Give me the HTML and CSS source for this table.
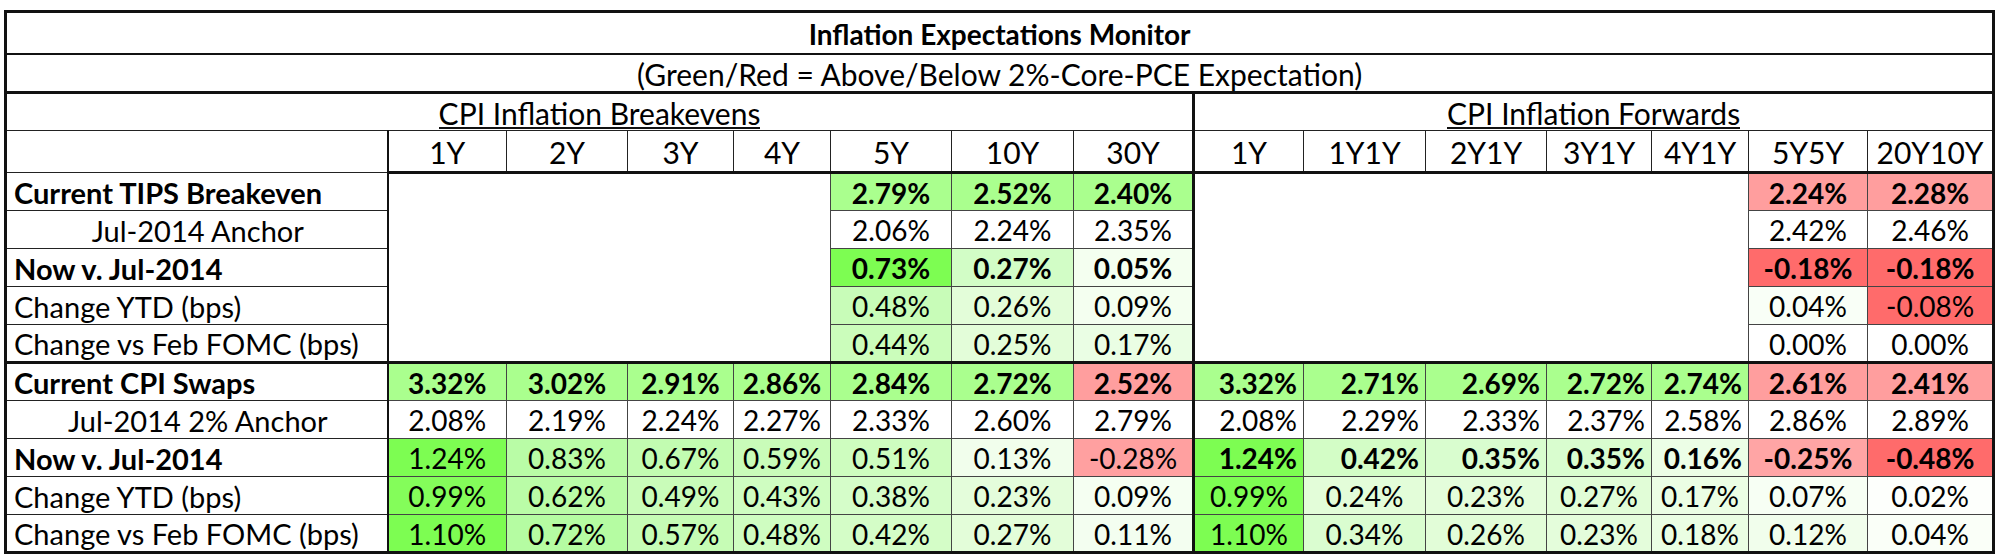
FILE: index.html
```html
<!DOCTYPE html>
<html>
<head>
<meta charset="utf-8">
<title>Inflation Expectations Monitor</title>
<link rel="stylesheet" href="styles.css">
</head>
<body>
<div class="wrap">
<table class="monitor">
  <colgroup>
    <col class="w-label"><col class="w-1y"><col class="w-2y"><col class="w-3y"><col class="w-4y"><col class="w-5y"><col class="w-10y"><col class="w-30y">
    <col class="w-f1y"><col class="w-1y1y"><col class="w-2y1y"><col class="w-3y1y"><col class="w-4y1y"><col class="w-5y5y"><col class="w-20y10y">
  </colgroup>
  <tr class="title"><td colspan="15">Inflation Expectations Monitor</td></tr>
  <tr class="subtitle"><td colspan="15">(Green/Red = Above/Below 2%-Core-PCE Expectation)</td></tr>
  <tr class="section">
    <td colspan="8"><span class="ul">CPI Inflation Breakevens</span></td>
    <td colspan="7" class="divl"><span class="ul">CPI Inflation Forwards</span></td>
  </tr>
  <tr class="head">
    <td class="lab"></td>
    <td>1Y</td><td>2Y</td><td>3Y</td><td>4Y</td><td>5Y</td><td>10Y</td><td>30Y</td>
    <td class="divl">1Y</td><td>1Y1Y</td><td>2Y1Y</td><td>3Y1Y</td><td>4Y1Y</td><td>5Y5Y</td><td>20Y10Y</td>
  </tr>

  <tr class="data bold">
    <td class="lab">Current TIPS Breakeven</td>
    <td class="blank" colspan="4" rowspan="5"></td>
    <td style="background:#aaff8e">2.79%</td><td style="background:#aaff8e">2.52%</td><td style="background:#aaff8e">2.40%</td>
    <td class="blank divl" colspan="5" rowspan="5"></td>
    <td style="background:#ff9e9e">2.24%</td><td style="background:#ff9e9e">2.28%</td>
  </tr>
  <tr class="data">
    <td class="lab center">Jul-2014 Anchor</td>
    <td>2.06%</td><td>2.24%</td><td>2.35%</td>
    <td>2.42%</td><td>2.46%</td>
  </tr>
  <tr class="data bold">
    <td class="lab">Now v. Jul-2014</td>
    <td style="background:#7dfd52">0.73%</td><td style="background:#d2fdc6">0.27%</td><td style="background:#f4fff0">0.05%</td>
    <td style="background:#ff6b6b">-0.18%</td><td style="background:#ff6b6b">-0.18%</td>
  </tr>
  <tr class="data">
    <td class="lab">Change YTD (bps)</td>
    <td style="background:#c8fcb8">0.48%</td><td style="background:#e3fdd9">0.26%</td><td style="background:#f4fff0">0.09%</td>
    <td style="background:#f9fff7">0.04%</td><td style="background:#ff6b6b">-0.08%</td>
  </tr>
  <tr class="data">
    <td class="lab">Change vs Feb FOMC (bps)</td>
    <td style="background:#cbfdbb">0.44%</td><td style="background:#e3fdd9">0.25%</td><td style="background:#eafee4">0.17%</td>
    <td>0.00%</td><td>0.00%</td>
  </tr>

  <tr class="data bold sep">
    <td class="lab">Current CPI Swaps</td>
    <td style="background:#aaff8e">3.32%</td><td style="background:#aaff8e">3.02%</td><td style="background:#aaff8e">2.91%</td><td style="background:#aaff8e">2.86%</td><td style="background:#aaff8e">2.84%</td><td style="background:#aaff8e">2.72%</td><td style="background:#ff9e9e">2.52%</td>
    <td class="divl r" style="background:#aaff8e">3.32%</td><td class="r" style="background:#aaff8e">2.71%</td><td class="r" style="background:#aaff8e">2.69%</td><td class="r" style="background:#aaff8e">2.72%</td><td class="r" style="background:#aaff8e">2.74%</td><td style="background:#ff9e9e">2.61%</td><td style="background:#ff9e9e">2.41%</td>
  </tr>
  <tr class="data">
    <td class="lab center">Jul-2014 2% Anchor</td>
    <td>2.08%</td><td>2.19%</td><td>2.24%</td><td>2.27%</td><td>2.33%</td><td>2.60%</td><td>2.79%</td>
    <td class="divl r">2.08%</td><td class="r">2.29%</td><td class="r">2.33%</td><td class="r">2.37%</td><td class="r">2.58%</td><td>2.86%</td><td>2.89%</td>
  </tr>
  <tr class="data">
    <td class="lab b">Now v. Jul-2014</td>
    <td style="background:#7dfd52">1.24%</td><td style="background:#b9fca6">0.83%</td><td style="background:#c2fcb1">0.67%</td><td style="background:#c9fcb9">0.59%</td><td style="background:#cefdbf">0.51%</td><td style="background:#f1feec">0.13%</td><td style="background:#ffa0a0">-0.28%</td>
    <td class="divl r b" style="background:#7dfd52">1.24%</td><td class="r b" style="background:#d3fdc6">0.42%</td><td class="r b" style="background:#d9fdcf">0.35%</td><td class="r b" style="background:#d9fdcf">0.35%</td><td class="r b" style="background:#ecfee6">0.16%</td><td class="b" style="background:#ffa5a5">-0.25%</td><td class="b" style="background:#ff6b6b">-0.48%</td>
  </tr>
  <tr class="data">
    <td class="lab">Change YTD (bps)</td>
    <td style="background:#84fd5a">0.99%</td><td style="background:#bafca7">0.62%</td><td style="background:#c9fcb9">0.49%</td><td style="background:#cffdc1">0.43%</td><td style="background:#d5fdc9">0.38%</td><td style="background:#e4fddb">0.23%</td><td style="background:#f5fff2">0.09%</td>
    <td class="divl" style="background:#7dfd52">0.99%</td><td style="background:#e3fdd9">0.24%</td><td style="background:#e4fddb">0.23%</td><td style="background:#e1fdd7">0.27%</td><td style="background:#ebfee4">0.17%</td><td style="background:#f7fff4">0.07%</td><td style="background:#fdfffc">0.02%</td>
  </tr>
  <tr class="data">
    <td class="lab">Change vs Feb FOMC (bps)</td>
    <td style="background:#7dfd52">1.10%</td><td style="background:#b5fca2">0.72%</td><td style="background:#c6fcb5">0.57%</td><td style="background:#cffdc1">0.48%</td><td style="background:#d4fdc7">0.42%</td><td style="background:#e3fdd9">0.27%</td><td style="background:#f3fef0">0.11%</td>
    <td class="divl" style="background:#7dfd52">1.10%</td><td style="background:#dafdd0">0.34%</td><td style="background:#e2fdd8">0.26%</td><td style="background:#e4fddb">0.23%</td><td style="background:#eafee3">0.18%</td><td style="background:#f1feec">0.12%</td><td style="background:#fafff8">0.04%</td>
  </tr>
</table>
</div>
</body>
</html>
```

FILE: styles.css
```css
html, body {
  margin: 0;
  padding: 0;
  background: #ffffff;
}

.wrap {
  padding: 10px 0 0 4px;
}

.monitor {
  border-collapse: collapse;
  table-layout: fixed;
  width: 1988px;
  border: 3px solid #111;
  font-family: Lato, "Liberation Sans", sans-serif;
  font-size: 28px;
  color: #000;
}

.w-label { width: 382px; }
.w-1y { width: 119px; }
.w-2y { width: 121px; }
.w-3y { width: 106px; }
.w-4y { width: 97px; }
.w-5y { width: 121px; }
.w-10y { width: 122px; }
.w-30y { width: 120px; }
.w-f1y { width: 110px; }
.w-1y1y { width: 122px; }
.w-2y1y { width: 121px; }
.w-3y1y { width: 105px; }
.w-4y1y { width: 97px; }
.w-5y5y { width: 119px; }
.w-20y10y { width: 126px; }

.monitor td {
  padding: 3px 5px 0 5px;
  white-space: nowrap;
  text-align: center;
  vertical-align: middle;
  line-height: 1.1;
}

.title { height: 42px; }
.subtitle { height: 35px; }
.section { height: 38px; }
.head { height: 42px; }
.data { height: 38px; }

.title td {
  font-weight: 700;
  border-bottom: 2px solid #111;
}

.subtitle td {
  font-size: 30px;
  border-bottom: 3px solid #111;
}

.section td {
  font-size: 30px;
  border-bottom: 1px solid #222;
}

.ul {
  display: inline-block;
  line-height: 0.95;
  border-bottom: 2px solid #111;
}

.head td {
  font-size: 30px;
  border-left: 1px solid #222;
  border-right: 1px solid #222;
  border-bottom: 3px solid #111;
}

.data td {
  border: 1px solid #444;
}

.monitor .lab {
  font-size: 29px;
  text-align: left;
  padding-left: 7px;
  border-right: 2px solid #111;
  border-bottom: 1px solid #222;
}

.monitor .lab.center {
  text-align: center;
}

.monitor .blank {
  border: none;
}

.bold td,
.monitor .b {
  font-weight: 700;
}

.sep td {
  border-top: 3px solid #111;
}

.monitor .divl {
  border-left: 3px solid #111;
}

.monitor .r {
  text-align: right;
  padding-right: 6px;
}
```
